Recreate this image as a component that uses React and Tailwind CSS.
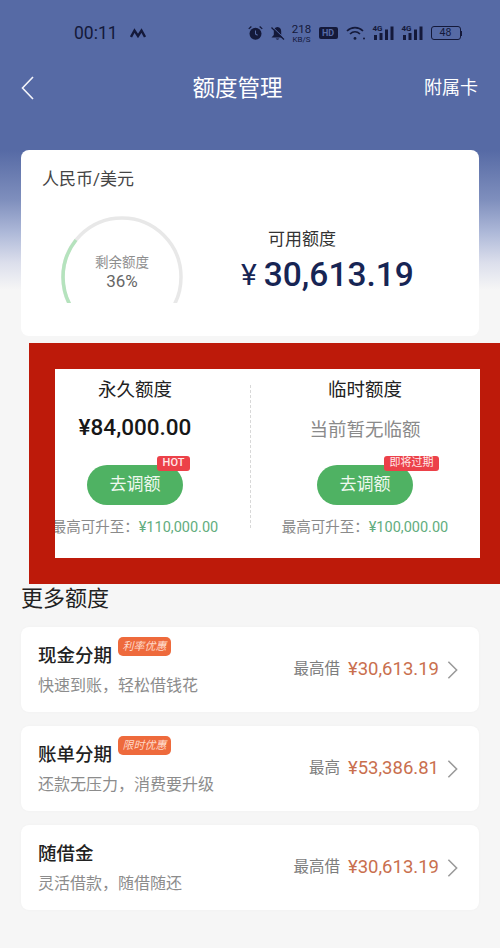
// App.jsx
const font = { fontFamily: 'Roboto, "Noto Sans CJK SC", sans-serif' };

function StatusIcons() {
  return (
    <div className="flex items-center text-[#14193a]">
      <svg width="15" height="16" viewBox="0 0 16 16" className="mr-[7px]" fill="currentColor">
        <circle cx="8" cy="8.8" r="6.4" />
        <path d="M0.8 3.6 L3.6 1 M15.2 3.6 L12.4 1" stroke="currentColor" strokeWidth="1.4" />
        <path d="M8 5.2 V9 L10.2 10.4" stroke="#566aa5" strokeWidth="1.1" fill="none" />
      </svg>
      <svg width="15" height="15" viewBox="0 0 15 15" className="mr-[7px]" fill="currentColor">
        <path d="M7.5 1 C4.8 1 3.8 3.2 3.8 5.5 V9 L1.5 11.6 H13.5 L11.2 9 V5.5 C11.2 3.2 10.2 1 7.5 1 Z" />
        <path d="M5.8 12.6 H9.2 C9 14 6 14 5.8 12.6 Z" />
        <path d="M1.5 1.5 L14 13.6" stroke="#14193a" strokeWidth="1.4" />
        <path d="M2.6 1 L14.6 12.6" stroke="#566aa5" strokeWidth="1" />
      </svg>
      <div className="mr-[7px] flex w-[20px] flex-col items-center">
        <span className="text-[11.5px] leading-[12px]">218</span>
        <span className="text-[8px] leading-[9px]">KB/S</span>
      </div>
      <div className="mr-[8px] flex h-[12px] w-[19px] items-center justify-center rounded-[2px] bg-[#14193a] text-[9px] font-bold leading-none text-[#566aa5]">
        HD
      </div>
      <svg width="20" height="15" viewBox="0 0 20 15" className="mr-[7px]" fill="none" stroke="currentColor" strokeWidth="1.7">
        <path d="M1 5 C5.5 0.6 12.5 0.6 17 5" />
        <path d="M4 8 C7 5.2 11 5.2 14 8" />
        <circle cx="9" cy="12.4" r="1.4" fill="currentColor" stroke="none" />
        <circle cx="18" cy="12.6" r="1" fill="currentColor" stroke="none" />
      </svg>
      <Signal />
      <Signal />
      <div className="flex h-[14px] w-[30px] items-center justify-center rounded-[3px] border border-[#14193a] text-[10.5px] leading-none">
        48
      </div>
      <div className="h-[5px] w-[1.5px] bg-[#14193a]" />
    </div>
  );
}

function Signal() {
  return (
    <div className="relative mr-[8px] h-[14px] w-[21px]">
      <span className="absolute left-0 top-[-1px] text-[8px] font-bold leading-[8px]">4G</span>
      <svg width="21" height="14" viewBox="0 0 21 14" fill="currentColor">
        <rect x="1" y="9" width="3" height="5" />
        <rect x="6.5" y="7" width="3" height="7" />
        <rect x="12" y="3.5" width="3" height="10.5" />
        <rect x="17.5" y="0.5" width="3" height="13.5" />
      </svg>
    </div>
  );
}

function Gauge() {
  return (
    <div className="relative h-[88px] w-[124px]">
      <svg width="124" height="88" viewBox="0 0 124 88" fill="none" strokeWidth="3.5">
        <circle cx="62" cy="62" r="59" stroke="#e8e8e8" />
        <path d="M17 100 A59 59 0 0 1 16 25" stroke="#b5e3bd" />
      </svg>
      <div className="absolute inset-x-0 top-[38px] flex flex-col items-center">
        <span className="text-[13.5px] leading-[18px] text-[#8e8e8e]">剩余额度</span>
        <span className="text-[17px] leading-[20px] text-[#666]">36%</span>
      </div>
    </div>
  );
}

function QuotaColumn({ title, children, badge, badgeClass, limit, className }) {
  return (
    <div className={`flex shrink-0 flex-col items-center ${className}`}>
      <div className="mt-[9px] text-[18.5px] leading-[24px] text-[#222]">{title}</div>
      <div className="mt-[13px] flex h-[26px] items-center">{children}</div>
      <div className="relative mt-[24px] flex h-[40px] w-[96px] items-center justify-center rounded-full bg-[#4fb263] text-[17px] text-[#eef8ef]">
        去调额
        <span className={`absolute flex h-[15px] items-center justify-center rounded-[3px] bg-[#ec4149] text-[#ffe9e9] ${badgeClass}`}>
          {badge}
        </span>
      </div>
      <div className="mt-[13px] whitespace-nowrap text-[14.5px] leading-[20px] text-[#8a8a8a]">
        最高可升至：<span className="text-[#62ad7e]">{limit}</span>
      </div>
    </div>
  );
}

function MoreCard({ title, tag, sub, label, amount }) {
  return (
    <div className="flex h-[85px] items-center justify-between rounded-lg bg-white pl-[17px] pr-[21px] shadow-[0_0_3px_rgba(0,0,0,0.03)]">
      <div className="flex flex-col self-start">
        <div className="flex h-[39px] items-start">
          <span className="mt-[16px] text-[18.5px] font-medium leading-[26px] text-[#222]">{title}</span>
          {tag && (
            <span className="ml-[6px] mt-[10px] flex h-[19px] w-[53px] items-center justify-center rounded-[5px] bg-[#ee6a3c] text-[11px] italic leading-none text-[#ffd9c8]">
              {tag}
            </span>
          )}
        </div>
        <span className="mt-[9px] text-[16px] leading-[22px] text-[#8c8c8c]">{sub}</span>
      </div>
      <div className="flex items-center">
        <span className="text-[15.5px] text-[#7d7d7d]">{label}</span>
        <span className="ml-[8px] text-[18.5px] text-[#c96f4e]">{amount}</span>
        <svg width="11" height="20" viewBox="0 0 12 20" className="ml-[8px]" fill="none" stroke="#9a9a9a" strokeWidth="1.7">
          <path d="M1.5 1 L10.5 10 L1.5 19" />
        </svg>
      </div>
    </div>
  );
}

export default function App() {
  return (
    <div
      style={font}
      className="h-[948px] w-[500px] overflow-hidden bg-[#f6f6f6] bg-[linear-gradient(to_bottom,#566aa5_0px,#566aa5_150px,#7f8fbd_200px,#adb8d8_232px,#dcdfec_263px,#f6f6f6_290px)]"
    >
      {/* status bar */}
      <div className="flex h-[43px] items-end justify-between pl-[74px] pr-[38px]">
        <div className="flex h-[20px] items-center text-[#14193a]">
          <span className="text-[17.5px] leading-[20px]">00:11</span>
          <svg width="16" height="10" viewBox="0 0 16 10" className="ml-[12px]" fill="none" stroke="currentColor" strokeWidth="2.4">
            <path d="M1 9 L4.5 2.5 L8 8 L11.5 2.5 L15 9" />
          </svg>
        </div>
        <div className="flex h-[20px] items-center">
          <StatusIcons />
        </div>
      </div>

      {/* nav */}
      <div className="mt-[18px] flex h-[54px] items-center justify-between pl-[21px] pr-[22px] text-white">
        <svg width="13" height="24" viewBox="0 0 13 24" fill="none" stroke="#f4f5fa" strokeWidth="1.6">
          <path d="M12 1 L1.5 12 L12 23" />
        </svg>
        <span className="ml-[17px] text-[22.5px] leading-none">额度管理</span>
        <span className="text-[18px] leading-none">附属卡</span>
      </div>

      {/* balance card */}
      <div className="mx-[21px] mt-[35px] h-[186px] rounded-lg bg-white pl-[21px] pt-[17px]">
        <div className="text-[17px] leading-[24px] text-[#444]">人民币/美元</div>
        <div className="mt-[24px] flex">
          <div className="ml-[18px]">
            <Gauge />
          </div>
          <div className="ml-[57px] flex flex-col">
            <span className="ml-[27px] mt-[12px] text-[17px] leading-[24px] text-[#333]">可用额度</span>
            <div className="mt-[4px] flex items-center leading-[40px] text-[#172554]">
              <span className="text-[30px] font-normal">¥</span>
              <span className="ml-[7px] text-[33.5px] font-medium">30,613.19</span>
            </div>
          </div>
        </div>
      </div>

      {/* red frame */}
      <div className="ml-[29px] mt-[7px] h-[241px] bg-[#bd1a0a] pb-[26px] pl-[26px] pr-[20px] pt-[26px]">
        <div className="flex h-[189px] overflow-hidden bg-white">
          <QuotaColumn
            title="永久额度"
            badge="HOT"
            badgeClass="right-[-7px] top-[-9px] w-[33px] text-[11px] font-medium"
            limit="¥110,000.00"
            className="ml-[-35px] w-[230px]"
          >
            <span className="text-[22.5px] font-medium text-[#171717]">¥84,000.00</span>
          </QuotaColumn>
          <div className="mt-[16px] h-[143px] border-l border-dashed border-[#d8d8d8]" />
          <QuotaColumn
            title="临时额度"
            badge="即将过期"
            badgeClass="left-[67px] top-[-9px] w-[55px] whitespace-nowrap text-[11px]"
            limit="¥100,000.00"
            className="w-[228px]"
          >
            <span className="pt-[5px] text-[18.5px] text-[#8a8a8a]">当前暂无临额</span>
          </QuotaColumn>
        </div>
      </div>

      {/* more */}
      <div className="px-[21px]">
        <div className="flex h-[30px] items-center text-[22px] leading-none text-[#222]">更多额度</div>
        <div className="mt-[13px] flex flex-col gap-[14px]">
          <MoreCard title="现金分期" tag="利率优惠" sub="快速到账，轻松借钱花" label="最高借" amount="¥30,613.19" />
          <MoreCard title="账单分期" tag="限时优惠" sub="还款无压力，消费要升级" label="最高" amount="¥53,386.81" />
          <MoreCard title="随借金" sub="灵活借款，随借随还" label="最高借" amount="¥30,613.19" />
        </div>
      </div>
    </div>
  );
}
